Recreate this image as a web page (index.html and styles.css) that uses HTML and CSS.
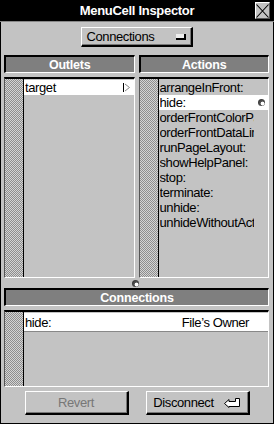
FILE: index.html
```html
<!DOCTYPE html>
<html lang="en">
<head>
    <meta charset="UTF-8">
    <meta name="viewport" content="width=device-width, initial-scale=1.0">
    <title>MenuCell Inspector</title>
    <link rel="stylesheet" href="styles.css">
</head>
<body>

    <div class="window">
        <div class="titlebar">
            <span class="title">MenuCell Inspector</span>
            <span class="close-box">
                <svg width="13" height="14" viewBox="0 0 13 14"><path d="M0.5 0.5 L12.5 13.5 M12.5 0.5 L0.5 13.5" stroke="#000" stroke-width="1.1" fill="none"/></svg>
            </span>
        </div>

        <div class="popup-row">
            <div class="popup">
                <span>Connections</span>
                <span class="popup-knob"></span>
            </div>
        </div>

        <div class="panes">
            <div class="pane">
                <div class="pane-header">Outlets</div>
                <div class="list">
                    <div class="stripe"></div>
                    <div class="rows">
                        <div class="row selected">
                            <span class="label">target</span>
                            <span class="slot">
                                <svg width="7" height="9" viewBox="0 0 7 9"><path d="M0.5 0 V9" stroke="#000" stroke-width="1"/><path d="M2 1 L6.5 4.5 L2 8" stroke="#888" stroke-width="1" fill="none"/></svg>
                            </span>
                        </div>
                    </div>
                </div>
            </div>
            <div class="pane">
                <div class="pane-header">Actions</div>
                <div class="list">
                    <div class="stripe"></div>
                    <div class="rows">
                        <div class="row"><span class="label">arrangeInFront:</span><span class="slot"></span></div>
                        <div class="row selected"><span class="label">hide:</span><span class="slot"><span class="dot"></span></span></div>
                        <div class="row"><span class="label">orderFrontColorPanel:</span><span class="slot"></span></div>
                        <div class="row"><span class="label">orderFrontDataLinkPanel:</span><span class="slot"></span></div>
                        <div class="row"><span class="label">runPageLayout:</span><span class="slot"></span></div>
                        <div class="row"><span class="label">showHelpPanel:</span><span class="slot"></span></div>
                        <div class="row"><span class="label">stop:</span><span class="slot"></span></div>
                        <div class="row"><span class="label">terminate:</span><span class="slot"></span></div>
                        <div class="row"><span class="label">unhide:</span><span class="slot"></span></div>
                        <div class="row"><span class="label">unhideWithoutActivation:</span><span class="slot"></span></div>
                    </div>
                </div>
            </div>
        </div>

        <div class="split-knob"><span class="dot"></span></div>

        <div class="connections">
            <div class="pane-header">Connections</div>
            <div class="list short">
                <div class="stripe"></div>
                <div class="rows">
                    <div class="row selected conn-row">
                        <span class="label">hide:</span>
                        <span class="target">File’s Owner</span>
                    </div>
                </div>
            </div>
        </div>

        <div class="buttons">
            <button class="btn disabled">Revert</button>
            <button class="btn">Disconnect
                <svg class="return-icon" width="17" height="10" viewBox="0 0 17 10"><path d="M0.5 5.5 L5 1.5 V3.5 H11.5 V0.5 H15.5 V8.5 H5 V9.5 Z" stroke="#000" stroke-width="1" fill="#fff"/></svg>
            </button>
        </div>
    </div>

</body>
</html>
```

FILE: styles.css
```css
:root {
    --panel-bg: #c3c3c3;
    --header-bg: #7f7f7f;
    --dark: #555;
}

body {
    margin: 0;
    font-family: 'Liberation Sans', Arial, sans-serif;
    background-color: var(--panel-bg);
}

.window {
    width: 274px;
    height: 424px;
    box-sizing: border-box;
    border: 1px solid #000;
    border-top: 0;
    background-color: var(--panel-bg);
    display: flex;
    flex-direction: column;
}

.titlebar {
    height: 21px;
    background: #000;
    border-bottom: 1px solid #888;
    color: #fff;
    display: flex;
    align-items: center;
    justify-content: center;
    position: relative;
    margin: 0 -1px;
}

.title {
    font-weight: bold;
    font-size: 13px;
    letter-spacing: -0.3px;
}

.close-box {
    position: absolute;
    right: 4px;
    top: 2px;
    width: 15px;
    height: 17px;
    box-sizing: border-box;
    background: var(--panel-bg);
    border: 1px solid #fff;
    border-right-color: #555;
    border-bottom-color: #555;
    display: flex;
    align-items: center;
    justify-content: center;
}

.popup-row {
    display: flex;
    justify-content: center;
    padding-top: 5px;
    margin-left: -1px;
}

.popup {
    width: 112px;
    height: 20px;
    box-sizing: border-box;
    border: 1px solid #fff;
    border-right: 2px solid #000;
    border-bottom: 2px solid #000;
    box-shadow: inset -1px -1px 0 #777;
    display: flex;
    align-items: center;
    justify-content: space-between;
    padding: 0 5px 0 5px;
    font-size: 13px;
    letter-spacing: -0.4px;
}

.popup-knob {
    width: 8px;
    height: 4px;
    background: #eee;
    border-right: 2px solid #000;
    border-bottom: 2px solid #000;
}

.panes {
    display: flex;
    gap: 4px;
    padding: 8px 4px 0 3px;
}

.pane {
    flex: 1;
    display: flex;
    flex-direction: column;
    gap: 4px;
    min-width: 0;
}

.pane-header {
    height: 18px;
    box-sizing: border-box;
    background: var(--header-bg);
    border: 1px solid #fff;
    border-top: 2px solid #000;
    border-left: 2px solid #000;
    color: #fff;
    font-weight: bold;
    font-size: 12.5px;
    letter-spacing: -0.2px;
    display: flex;
    align-items: center;
    justify-content: center;
}

.list {
    height: 201px;
    box-sizing: border-box;
    border: 1px solid #fff;
    border-top: 2px solid #000;
    border-left: 1px solid #555;
    display: flex;
}

.list.short {
    height: 77px;
}

.stripe {
    width: 18px;
    flex: none;
    border-right: 1px solid #000;
    background-image: repeating-conic-gradient(#8e8e8e 0 25%, #d4d4d4 0 50%);
    background-size: 2px 2px;
}

.rows {
    flex: 1;
    min-width: 0;
    padding-top: 1px;
}

.row {
    height: 15px;
    display: flex;
    align-items: center;
    font-size: 13px;
    letter-spacing: -0.4px;
    padding-left: 1px;
    overflow: hidden;
    white-space: nowrap;
}

.row .label {
    flex: 1;
    overflow: hidden;
}

.slot {
    flex: none;
    width: 14px;
    display: flex;
    align-items: center;
    justify-content: center;
}

.row.selected {
    background: #fff;
}

.dot {
    flex: none;
    width: 7px;
    height: 7px;
    border-radius: 50%;
    background: radial-gradient(circle at 65% 65%, #fff 0 25%, #555 35%, #222 100%);
}

.split-knob {
    height: 10px;
    display: flex;
    align-items: center;
    justify-content: center;
}

.split-knob .dot {
    margin-left: -4px;
}

.connections {
    display: flex;
    flex-direction: column;
    gap: 4px;
    padding: 0 4px 0 3px;
}

.conn-row {
    height: 18px;
    border-bottom: 1px solid #888;
}

.conn-row .target {
    padding-right: 19px;
}

.buttons {
    display: flex;
    justify-content: center;
    gap: 17px;
    margin-top: 4px;
}

.btn {
    width: 104px;
    height: 24px;
    box-sizing: border-box;
    background: var(--panel-bg);
    border: 1px solid #fff;
    border-right: 2px solid #000;
    border-bottom: 2px solid #000;
    box-shadow: inset -1px -1px 0 #777;
    font-family: 'Liberation Sans', Arial, sans-serif;
    font-size: 13px;
    letter-spacing: -0.4px;
    color: #000;
    display: flex;
    align-items: center;
    justify-content: center;
    gap: 10px;
    padding: 0;
}

.btn.disabled {
    color: #777;
}

.return-icon {
    flex: none;
}
```
